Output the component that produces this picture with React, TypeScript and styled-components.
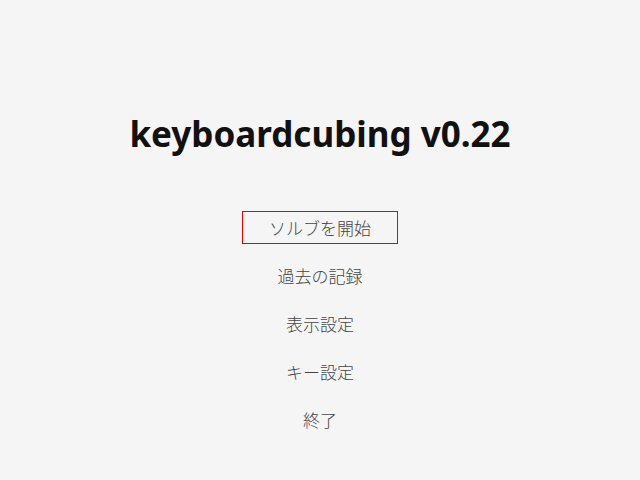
import React from "react";
import styled, { createGlobalStyle } from "styled-components";

const Global = createGlobalStyle`
  html, body { margin: 0; padding: 0; background: #f5f5f5; }
  body { font-family: "Noto Sans CJK JP", "Noto Sans", sans-serif; }
`;

const Page = styled.div`
  width: 640px;
  height: 480px;
  display: flex;
  flex-direction: column;
  align-items: center;
  box-sizing: border-box;
  padding-top: 110px;
`;

const Title = styled.h1`
  margin: 0;
  font-family: "Noto Sans", sans-serif;
  font-size: 35px;
  font-weight: 700;
  color: #111;
  line-height: 48px;
`;

const Menu = styled.div`
  margin-top: 53px;
  display: flex;
  flex-direction: column;
  align-items: center;
  gap: 15px;
`;

const Item = styled.button<{ $active?: boolean }>`
  width: 156px;
  height: 33px;
  box-sizing: border-box;
  border: 1px solid ${(p) => (p.$active ? "#e00" : "transparent")};
  background: transparent;
  font-family: "Noto Sans CJK JP", "Noto Sans", sans-serif;
  font-size: 17px;
  font-weight: 300;
  color: #444;
  padding: 0;
`;

const items = ["ソルブを開始", "過去の記録", "表示設定", "キー設定", "終了"];

export default function App() {
  return (
    <Page>
      <Global />
      <Title>keyboardcubing v0.22</Title>
      <Menu>
        {items.map((t, i) => (
          <Item key={t} $active={i === 0}>{t}</Item>
        ))}
      </Menu>
    </Page>
  );
}
